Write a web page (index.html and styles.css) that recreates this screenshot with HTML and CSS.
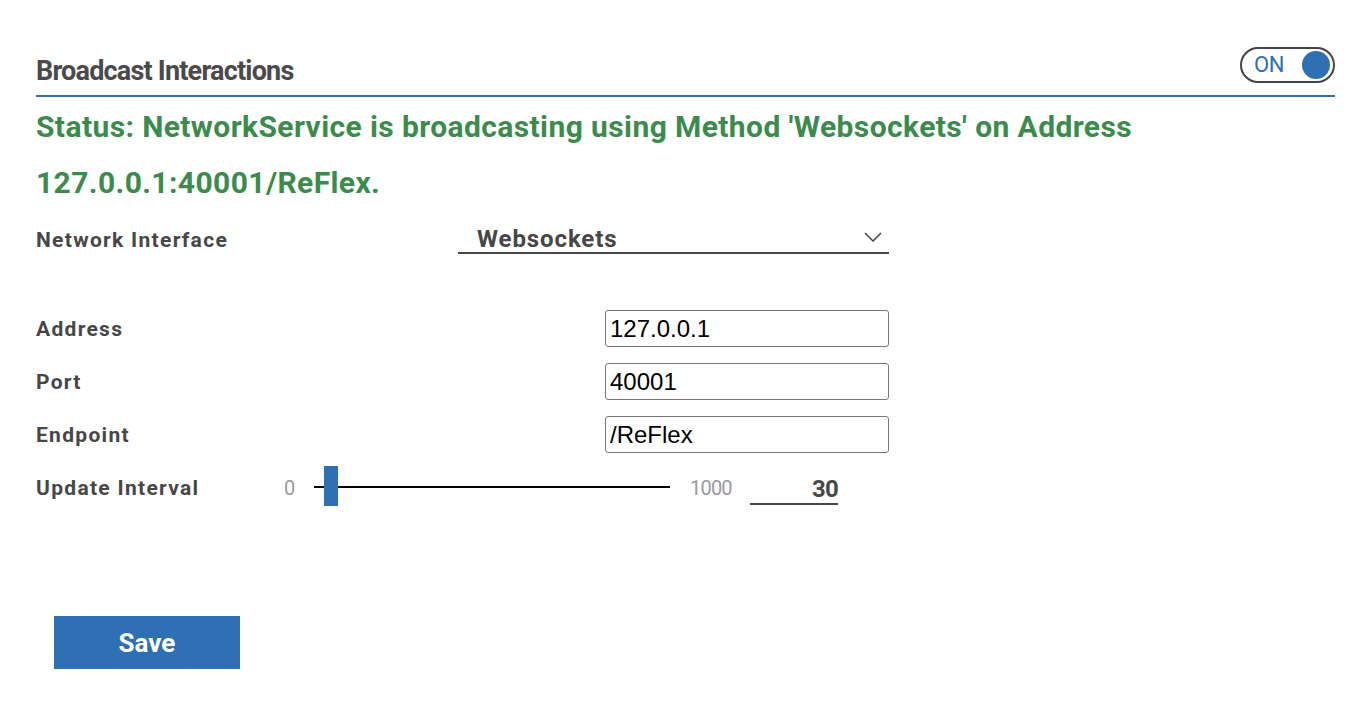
FILE: index.html
```html
<!DOCTYPE html>
<html>
<head>
<meta charset="utf-8">
<link rel="stylesheet" href="styles.css">
</head>
<body>
<div class="panel">
  <div class="header">
    <h1 class="title">Broadcast Interactions</h1>
    <div class="toggle"><span class="toggle-label">ON</span><span class="knob"></span></div>
  </div>
  <p class="status">Status: NetworkService is broadcasting using Method 'Websockets' on Address 127.0.0.1:40001/ReFlex.</p>
  <div class="form">
    <div class="row row-select">
      <label class="label">Network Interface</label>
      <div class="select">
        <span class="select-value">Websockets</span>
        <svg class="chevron" width="18" height="10" viewBox="0 0 18 10"><path d="M1 1 L9 9 L17 1" fill="none" stroke="#444" stroke-width="1.5"/></svg>
      </div>
    </div>
    <div class="fields">
      <div class="row">
        <label class="label">Address</label>
        <input class="text-input" type="text" value="127.0.0.1">
      </div>
      <div class="row">
        <label class="label">Port</label>
        <input class="text-input" type="text" value="40001">
      </div>
      <div class="row">
        <label class="label">Endpoint</label>
        <input class="text-input" type="text" value="/ReFlex">
      </div>
      <div class="row row-slider">
        <label class="label label-slider">Update Interval</label>
        <span class="range-min">0</span>
        <div class="track"><span class="thumb"></span></div>
        <span class="range-max">1000</span>
        <span class="range-value">30</span>
      </div>
    </div>
  </div>
  <button class="save">Save</button>
</div>
</body>
</html>
```

FILE: styles.css
```css
* { box-sizing: border-box; }
html, body { margin: 0; padding: 0; background: #fff; }
body {
  font-family: Roboto, "Liberation Sans", sans-serif;
  color: #474747;
}
.panel {
  width: 1335px;
  padding: 46px 0 0 36px;
}
.header {
  display: flex;
  justify-content: space-between;
  align-items: flex-start;
  height: 51px;
  border-bottom: 2px solid #2f6fb4;
}
.title {
  margin: 9px 0 0 0;
  font-family: Roboto, "Liberation Sans", sans-serif;
  font-weight: 700;
  font-size: 27px;
  line-height: 32px;
  color: #4a4a4a;
  letter-spacing: -0.8px;
}
.toggle {
  width: 95px;
  height: 36px;
  margin-top: 1px;
  border: 2px solid #444;
  border-radius: 18px;
  display: flex;
  align-items: center;
  justify-content: space-between;
  padding: 0 3px 0 12px;
}
.toggle-label {
  font-size: 22px;
  color: #2f6fb4;
  line-height: 1;
  letter-spacing: -0.5px;
}
.knob {
  width: 28px;
  height: 28px;
  border-radius: 50%;
  background: #2f6fb4;
}
.status {
  margin: 2px 0 0 0;
  font-size: 30px;
  line-height: 56px;
  font-weight: 700;
  color: #3b8c4c;
  letter-spacing: 0.4px;
}
.form {
  width: 853px;
  margin-top: 3px;
}
.row {
  display: flex;
  align-items: center;
  justify-content: space-between;
  height: 37px;
}
.row-select {
  height: 52px;
}
.label {
  font-size: 21px;
  font-weight: 700;
  color: #474747;
  letter-spacing: 1.3px;
}
.select {
  width: 431px;
  height: 28px;
  border-bottom: 2px solid #474747;
  display: flex;
  align-items: center;
  justify-content: space-between;
  padding: 0 7px 0 19px;
}
.select-value {
  font-size: 24px;
  font-weight: 700;
  color: #474747;
  letter-spacing: 0.9px;
}
.chevron { margin-top: -4px; }
.fields {
  margin-top: 44px;
  display: flex;
  flex-direction: column;
  gap: 16px;
}
.text-input {
  width: 284px;
  height: 37px;
  border: 1px solid #777;
  border-radius: 3px;
  padding: 0 4px;
  font-family: "Liberation Sans", Arial, sans-serif;
  font-size: 24px;
  color: #000;
  background: #fff;
  outline: none;
}
.row-slider {
  justify-content: flex-start;
}
.label-slider { width: 248px; }
.range-min, .range-max {
  font-size: 20px;
  color: #9a9a9a;
  letter-spacing: -0.8px;
}
.range-min { width: 30px; }
.track {
  position: relative;
  width: 356px;
  height: 2px;
  background: #000;
  margin-top: -2px;
}
.thumb {
  position: absolute;
  left: 10px;
  top: -20px;
  width: 14px;
  height: 40px;
  background: #2f6fb4;
}
.range-max { margin-left: 20px; width: 60px; }
.range-value {
  width: 88px;
  text-align: right;
  font-weight: 700;
  font-size: 24px;
  color: #474747;
  border-bottom: 2px solid #474747;
  line-height: 28px;
  margin-top: 4px;
  letter-spacing: -0.8px;
}
.save {
  margin: 110px 0 0 18px;
  width: 186px;
  height: 53px;
  border: none;
  background: #2f6fb4;
  color: #fff;
  font-family: Roboto, "Liberation Sans", sans-serif;
  font-weight: 700;
  font-size: 26px;
  cursor: pointer;
}
```
